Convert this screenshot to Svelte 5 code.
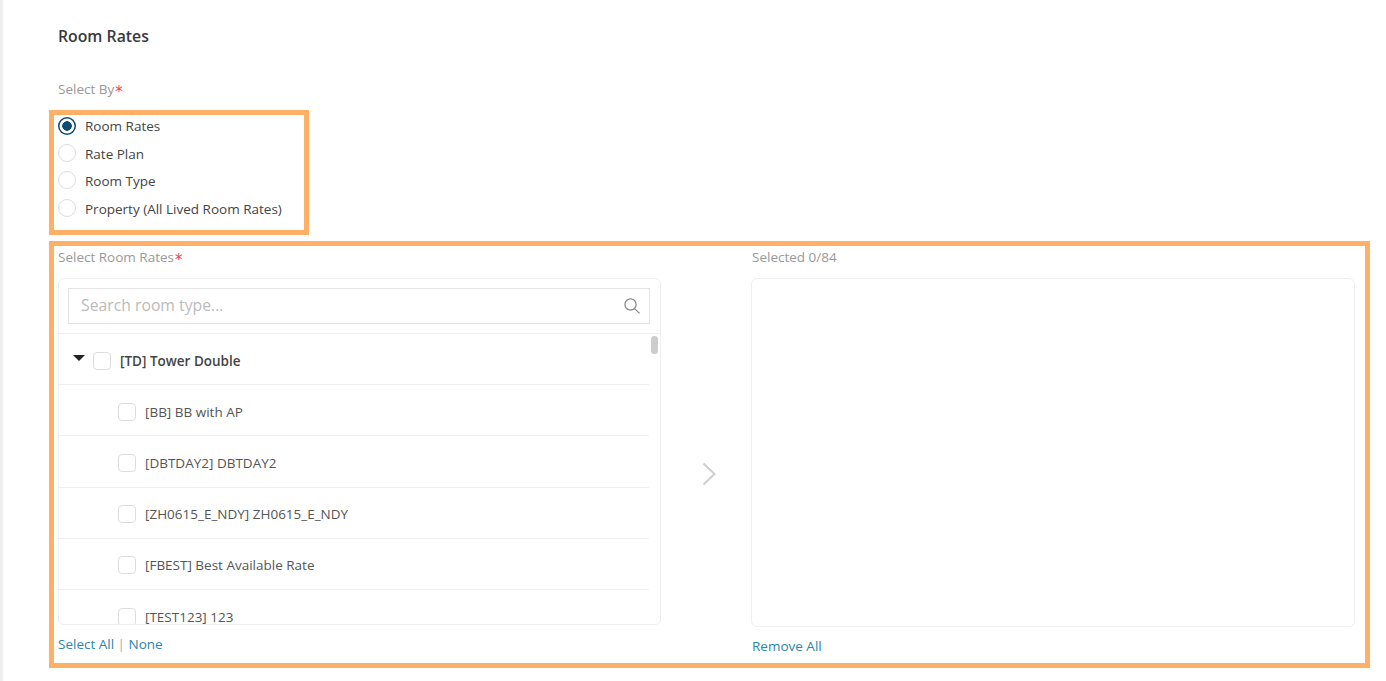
<script lang="ts">
  const options = ['Room Rates', 'Rate Plan', 'Room Type', 'Property (All Lived Room Rates)'];
  const rates = [
    '[BB] BB with AP',
    '[DBTDAY2] DBTDAY2',
    '[ZH0615_E_NDY] ZH0615_E_NDY',
    '[FBEST] Best Available Rate',
    '[TEST123] 123'
  ];
  let selected = 'Room Rates';
</script>

<div class="page">
  <h2 class="title">Room Rates</h2>

  <div class="label by">Select By<span class="req">*</span></div>

  <div class="mark radios">
    {#each options as opt}
      <div class="radio-row">
        <span class="radio" class:on={opt === selected}></span>
        <span>{opt}</span>
      </div>
    {/each}
  </div>

  <div class="mark transfer">
    <div class="side left">
      <div class="label">Select Room Rates<span class="req">*</span></div>
      <div class="panel">
        <div class="search">
          <span>Search room type...</span>
          <svg width="18" height="18" viewBox="0 0 18 18" fill="none" stroke="#8a8a8a" stroke-width="1.3">
            <circle cx="7.5" cy="7.5" r="5.6" />
            <path d="M11.6 11.6 L16.6 16.4" />
          </svg>
        </div>
        <div class="tree">
          <div class="thumb"></div>
          <div class="row parent">
            <span class="caret"></span>
            <span class="check"></span>
            <b>[TD] Tower Double</b>
          </div>
          {#each rates as rate}
            <div class="row child">
              <span class="check"></span>
              <span>{rate}</span>
            </div>
          {/each}
        </div>
      </div>
      <div class="links"><span>Select All</span><i>|</i><span>None</span></div>
    </div>

    <div class="arrow">
      <svg width="14" height="24" viewBox="0 0 14 24" fill="none" stroke="#cfcfcf" stroke-width="2">
        <path d="M1.5 1.5 L12.5 12 L1.5 22.5" />
      </svg>
    </div>

    <div class="side right">
      <div class="label">Selected 0/84</div>
      <div class="panel empty"></div>
      <div class="links remove"><span>Remove All</span></div>
    </div>
  </div>
</div>

<style>
  :global(body) {
    margin: 0;
    background: #fff;
    font-family: "Open Sans", "Liberation Sans", sans-serif;
    font-size: 13.5px;
    color: #444;
    overflow: hidden;
  }

  .page {
    box-sizing: border-box;
    height: 681px;
    padding: 26px 16px 0 49px;
    background: linear-gradient(to right, #ececec 0, #f4f4f4 3px, #fff 4px);
    overflow: hidden;
  }

  .title {
    margin: 0 0 0 9px;
    font-size: 15.8px;
    font-weight: 600;
    line-height: 20px;
    color: #3a3a3a;
  }

  .label {
    height: 20px;
    line-height: 20px;
    color: #999;
  }
  .by { margin: 33px 0 11px 9px; }
  .req {
    margin-left: 1px;
    font-family: "DejaVu Sans", sans-serif;
    font-size: 15px;
    line-height: 1;
    vertical-align: -3px;
    color: #f5414f;
  }

  .mark {
    box-sizing: border-box;
    border: 5px solid #ffb066;
  }

  .radios {
    display: flex;
    flex-direction: column;
    gap: 5.5px;
    width: 260px;
    height: 125px;
    padding: 0 4px;
  }
  .radio-row {
    display: flex;
    align-items: center;
    gap: 9px;
    height: 22px;
  }
  .radio {
    box-sizing: border-box;
    width: 18px;
    height: 18px;
    margin-bottom: 2px;
    border-radius: 50%;
    border: 1px solid #ddd;
    background: #fff;
  }
  .radio.on {
    margin-bottom: 0;
    border: 0;
    box-shadow: inset 0 0 0 1.5px #0f4c75;
    background: radial-gradient(circle, #0f4c75 0 4.5px, #fff 5px);
  }

  .transfer {
    display: flex;
    width: 1321px;
    height: 427px;
    margin-top: 6px;
    padding: 1px 10px 0 4px;
  }
  .side { display: flex; flex-direction: column; }
  .left { width: 603px; }
  .right { width: 604px; }
  .side .label { margin-bottom: 11px; }
  .right .label, .remove { padding-left: 1px; }

  .panel {
    box-sizing: border-box;
    height: 347px;
    border: 1px solid #eee;
    border-radius: 6px;
    overflow: hidden;
  }
  .panel.empty { height: 349px; }

  .search {
    box-sizing: border-box;
    display: flex;
    align-items: center;
    justify-content: space-between;
    height: 36px;
    margin: 9px 10px 9px 9px;
    padding: 0 8px 2px 12px;
    border: 1px solid #e4e4e4;
    font-size: 15.75px;
    color: #bbb;
  }
  .search svg { margin-top: 2px; }

  .tree {
    position: relative;
    height: 292px;
    border-top: 1px solid #eee;
    overflow: hidden;
  }
  .thumb {
    position: absolute;
    top: 2px;
    right: 2px;
    width: 7px;
    height: 18px;
    border-radius: 4px;
    background: #ccc;
  }

  .row {
    box-sizing: border-box;
    display: flex;
    align-items: center;
    width: 590px;
    height: 51.2px;
    padding-top: 3px;
    border-bottom: 1px solid #eee;
  }
  .parent { padding-left: 14px; color: #444; }
  .parent b { font-weight: 600; }
  .child { padding-left: 59px; color: #555; }
  .row:last-child { border-bottom: 0; }

  .caret {
    width: 0;
    height: 0;
    margin-right: 8px;
    margin-bottom: 5px;
    border-left: 6px solid transparent;
    border-right: 6px solid transparent;
    border-top: 6px solid #222;
  }
  .check {
    box-sizing: border-box;
    flex: none;
    width: 18px;
    height: 18px;
    margin-right: 9px;
    border: 1px solid #ddd;
    border-radius: 4px;
    background: #fff;
  }

  .links {
    margin-top: 9px;
    line-height: 20px;
    color: #2b86a8;
  }
  .links i { font-style: normal; color: #aaa; margin: 0 3.5px; }
  .remove { margin-top: 9px; }

  .arrow {
    display: flex;
    align-items: flex-start;
    width: 90px;
    padding: 215px 0 0 41px;
    box-sizing: border-box;
  }
</style>
